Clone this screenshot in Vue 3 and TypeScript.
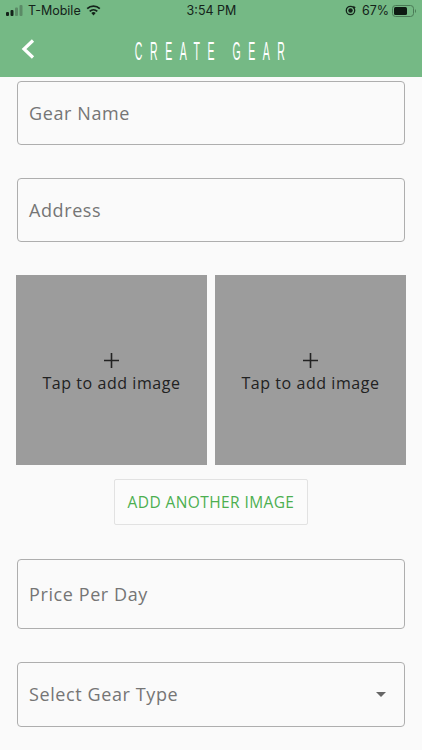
<script setup lang="ts">
const images: number[] = [1, 2]
</script>

<template>
  <div class="page">
    <header class="header">
      <div class="status">
        <div class="status-left">
          <svg class="signal" width="17" height="11" viewBox="0 0 17 11">
            <rect x="0" y="7" width="3" height="4" rx="1" fill="#14231a" />
            <rect x="4.5" y="5" width="3" height="6" rx="1" fill="#14231a" />
            <rect x="9" y="2.5" width="3" height="8.5" rx="1" fill="#5b8a66" />
            <rect x="13.5" y="0" width="3" height="11" rx="1" fill="#5b8a66" />
          </svg>
          <span>T-Mobile</span>
          <svg class="wifi" width="15" height="11" viewBox="0 0 15 11">
            <path d="M7.5 10.6 L5.3 8.1 A3.2 3.2 0 0 1 9.7 8.1 Z" fill="#14231a" />
            <path d="M3.7 6.3 A5.5 5.5 0 0 1 11.3 6.3" fill="none" stroke="#14231a" stroke-width="1.7" />
            <path d="M1.2 3.7 A9 9 0 0 1 13.8 3.7" fill="none" stroke="#14231a" stroke-width="1.7" />
          </svg>
        </div>
        <span class="clock">3:54 PM</span>
        <div class="status-right">
          <svg class="lock" width="11" height="11" viewBox="0 0 11 11">
            <circle cx="5.5" cy="5.5" r="4.2" fill="none" stroke="#14231a" stroke-width="1.3" />
            <circle cx="5.5" cy="5.5" r="2.2" fill="#14231a" />
            <path d="M8.2 0.8 L10.8 2.2 L8.6 3.8 Z" fill="#14231a" />
          </svg>
          <span>67%</span>
          <svg width="25" height="12" viewBox="0 0 25 12">
            <rect x="0.5" y="0.5" width="21" height="11" rx="3" fill="none" stroke="#4a7a56" />
            <rect x="2" y="2" width="13" height="8" rx="1.5" fill="#0d1a12" />
            <path d="M23 4 A2.5 2.5 0 0 1 23 8 Z" fill="#4a7a56" />
          </svg>
        </div>
      </div>
      <div class="nav">
        <svg class="back" width="16" height="22" viewBox="0 0 16 22">
          <path d="M13 2.5 L4 11 L13 19.5" fill="none" stroke="#fff" stroke-width="3.2" />
        </svg>
        <h1 class="title">CREATE GEAR</h1>
      </div>
    </header>

    <main class="form">
      <div class="field short"><span>Gear Name</span></div>
      <div class="field short"><span>Address</span></div>

      <div class="images">
        <div v-for="n in images" :key="n" class="tile">
          <svg class="plus" width="15" height="15" viewBox="0 0 15 15">
            <path d="M0 7.5 H15 M7.5 0 V15" fill="none" stroke="#222" stroke-width="1.6" />
          </svg>
          <span class="tap">Tap to add image</span>
        </div>
      </div>

      <button class="add" type="button">ADD ANOTHER IMAGE</button>

      <div class="field price"><span>Price Per Day</span></div>
      <div class="field select">
        <span>Select Gear Type</span>
        <i class="caret"></i>
      </div>
    </main>
  </div>
</template>

<style>
html, body { margin: 0; background: #fafafa; }
</style>

<style scoped>
.page {
  width: 422px;
  height: 750px;
  overflow: hidden;
  background: #fafafa;
  font-family: "Open Sans", sans-serif;
}
.header {
  height: 77px;
  background: #75b985;
  box-sizing: border-box;
}
.status {
  height: 21px;
  padding: 0 5px 0 6px;
  display: grid;
  grid-template-columns: 1fr auto 1fr;
  align-items: center;
  font-family: Inter, sans-serif;
  font-size: 12.5px;
  color: #14231a;
}
.status-left { display: flex; align-items: center; gap: 5px; }
.status-right { display: flex; align-items: center; justify-content: flex-end; gap: 3px; }
.lock { margin-right: 3px; }
.clock { position: relative; left: 0; }
.nav {
  position: relative;
  height: 56px;
  display: flex;
  align-items: center;
  justify-content: center;
}
.back { position: absolute; left: 20px; top: 17px; }
.title {
  margin: 0 -6px 0 0;
  position: relative;
  top: 2px;
  font-family: "Liberation Sans", sans-serif;
  font-weight: 400;
  color: #fff;
  font-size: 25px;
  letter-spacing: 18px;
  transform: scaleX(0.42);
  white-space: nowrap;
}
.form {
  padding: 4px 16px 0 16px;
  display: flex;
  flex-direction: column;
}
.field {
  margin-left: 1px;
  margin-right: 1px;
  box-sizing: border-box;
  border: 1.5px solid #aeaeae;
  border-radius: 4px;
  display: flex;
  align-items: center;
  justify-content: space-between;
  padding: 0 11px;
  font-size: 18px;
  letter-spacing: 0.6px;
  color: #757575;
}
.short { height: 64px; margin-bottom: 33px; }
.images { display: flex; gap: 8px; }
.tile {
  width: 191px;
  height: 190px;
  background: #9c9c9c;
  display: flex;
  flex-direction: column;
  align-items: center;
  padding-top: 78px;
  box-sizing: border-box;
  color: #222;
}
.plus { flex: none; }
.tap { margin-top: 4px; font-size: 16px; line-height: 22px; letter-spacing: 0.55px; }
.add {
  align-self: center;
  margin-top: 14px;
  width: 194px;
  height: 46px;
  background: #fbfbfb;
  border: 1px solid #e2e2e2;
  border-radius: 2px;
  color: #4caf50;
  font-family: "Open Sans", sans-serif;
  font-size: 15.5px;
  letter-spacing: 0.4px;
  white-space: nowrap;
  padding: 0;
}
.price { height: 69.5px; margin-top: 34px; }
.select { height: 65px; margin-top: 33px; padding-right: 18px; }
.caret {
  width: 0;
  height: 0;
  border-left: 5px solid transparent;
  border-right: 5px solid transparent;
  border-top: 5px solid #666;
}
</style>
